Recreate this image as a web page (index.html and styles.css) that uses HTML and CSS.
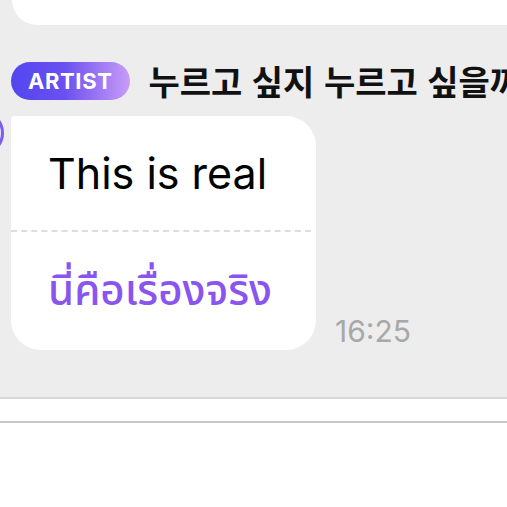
FILE: index.html
```html
<!DOCTYPE html>
<html lang="ko">

<head>
    <meta charset="UTF-8">
    <meta name="viewport" content="width=device-width, initial-scale=1.0">
    <title>Chat</title>
    <link rel="stylesheet" href="styles.css">
</head>

<body>
    <div class="chat">
        <div class="prev-bubble"></div>
        <div class="message">
            <div class="meta">
                <span class="badge">ARTIST</span>
                <span class="name">누르고 싶지 누르고 싶을까</span>
            </div>
            <div class="row">
                <div class="avatar"></div>
                <div class="bubble">
                    <div class="original">This is real</div>
                    <div class="translated">นี่คือเรื่องจริง</div>
                </div>
                <span class="time">16:25</span>
            </div>
        </div>
    </div>
    <div class="composer"></div>
</body>

</html>
```

FILE: styles.css
```css
body {
    font-family: "Inter", "Noto Sans", "Noto Sans CJK KR", sans-serif;
    background: #ffffff;
    margin: 0;
    padding: 0;
    overflow: hidden;
}

.chat {
    background-color: #ededed;
    height: 397px;
    border-bottom: 2px solid #d8d8d8;
    overflow: hidden;
}

.prev-bubble {
    height: 25px;
    margin-left: 12px;
    background-color: #ffffff;
    border-bottom-left-radius: 30px;
}

.meta {
    display: flex;
    align-items: center;
    gap: 18px;
    height: 38px;
    margin-top: 37px;
    padding-left: 11px;
    white-space: nowrap;
}

.badge {
    display: inline-block;
    height: 38px;
    line-height: 38px;
    padding: 0 18px 0 17px;
    border-radius: 19px;
    background: linear-gradient(90deg, #5346ef 0%, #6a50f1 45%, #c99cf6 100%);
    color: #ffffff;
    font-size: 22px;
    font-weight: 700;
    letter-spacing: 0.6px;
    flex-shrink: 0;
}

.name {
    font-family: "Noto Sans CJK KR", sans-serif;
    font-size: 34px;
    line-height: 38px;
    font-weight: 600;
    color: #111111;
}

.row {
    display: flex;
    align-items: flex-end;
    margin-top: 16px;
}

.avatar {
    width: 46px;
    height: 46px;
    margin-left: -42px;
    margin-top: -6px;
    align-self: flex-start;
    border-radius: 50%;
    border: 3px solid #7a5cf0;
    background: #e8e4fb;
    box-sizing: border-box;
    flex-shrink: 0;
}

.bubble {
    width: 305px;
    height: 234px;
    margin-left: 7px;
    background-color: #ffffff;
    border-radius: 4px 30px 30px 30px;
    box-sizing: border-box;
}

.original {
    height: 116px;
    padding: 31px 0 0 37px;
    box-sizing: border-box;
    font-size: 43px;
    color: #000000;
    border-bottom: 2px dashed #dddddd;
    margin-right: 5px;
}

.translated {
    padding: 28px 0 0 37px;
    font-family: "Noto Sans", "Noto Sans Thai", sans-serif;
    font-size: 42px;
    font-weight: 500;
    color: #8a55ee;
}

.time {
    margin: 0 0 1px 19px;
    font-size: 30px;
    color: #a8a8a8;
}

.composer {
    height: 22px;
    border-bottom: 2px solid #c8c8c8;
}
```
